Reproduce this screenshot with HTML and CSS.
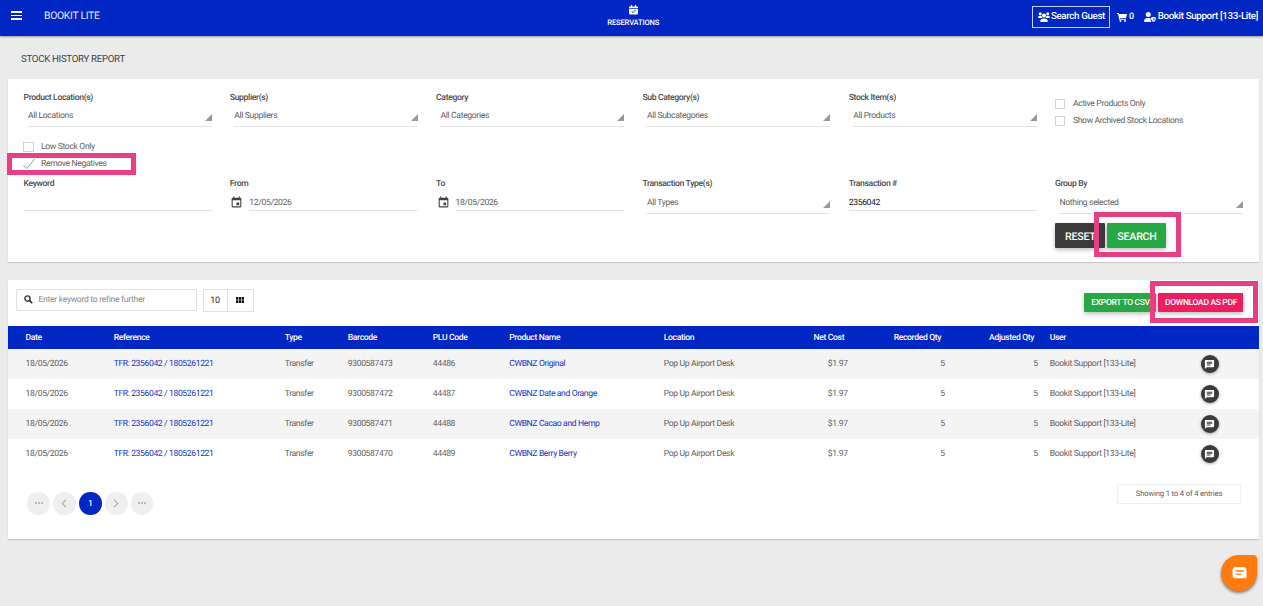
FILE: index.html
```html
<!DOCTYPE html>
<html lang="en">
<head>
<meta charset="utf-8">
<title>Stock History Report</title>
<link rel="stylesheet" href="styles.css">
</head>
<body>
<svg class="defs" width="0" height="0">
  <symbol id="calendar" viewBox="0 0 24 24"><path d="M17 12h-5v5h5v-5zM16 1v2H8V1H6v2H5c-1.100 0-2 .9-2 2v14c0 1.100.9 2 2 2h14c1.100 0 2-.9 2-2V5c0-1.100-.9-2-2-2h-1V1h-2zm3 18H5V8h14v11z"/></symbol>
  <symbol id="note" viewBox="0 0 24 24"><path d="M20 2H4c-1.100 0-2 .9-2 2v18l4-4h14c1.100 0 2-.9 2-2V4c0-1.100-.9-2-2-2zM6 6h12v2H6zm0 3h12v2H6zm8 5H6v-2h8z"/></symbol>
</svg>
<header class="topbar">
  <div class="brand">
    <span class="burger"><i></i><i></i><i></i></span>
    <span class="brand-name">BOOKIT LITE</span>
  </div>
  <div class="nav-item">
    <svg width="9" height="10" viewBox="0 0 20 22"><path fill="#fff" d="M4 0h3v3h6V0h3v3h2a2 2 0 0 1 2 2v2H0V5a2 2 0 0 1 2-2h2zM0 8.500h20V19a2 2 0 0 1-2 2H2a2 2 0 0 1-2-2z"/><path d="M6 14l3 3 5.500-6" fill="none" stroke="#0026c4" stroke-width="2"/></svg>
    <span>RESERVATIONS</span>
  </div>
  <div class="user-tools">
    <span class="guest"><svg width="12" height="10" viewBox="0 0 24 20"><g fill="#fff"><circle cx="4.500" cy="3.500" r="3"/><circle cx="19.500" cy="3.500" r="3"/><circle cx="12" cy="7" r="4"/><path d="M0 11c0-2 1.500-3.500 3.500-3.500h2c.7 0 1.300.2 1.800.5.2 1.700.8 3 1.700 4H1c-.6 0-1-.4-1-1zM24 11c0-2-1.500-3.500-3.500-3.500h-2c-.7 0-1.300.2-1.800.5-.2 1.700-.8 3-1.700 4h8c.6 0 1-.4 1-1zM4.500 19c0-3.500 2.500-6 5.500-6h4c3 0 5.500 2.500 5.500 6 0 .6-.4 1-1 1h-13c-.6 0-1-.4-1-1z"/></g></svg>Search Guest</span>
    <span class="cart"><svg width="10" height="9" viewBox="0 0 20 18"><path fill="#fff" d="M0 0h3.500l.5 2h16l-2 8H6l.3 1.500H18v2H4.500L2.200 2H0z"/><circle cx="7" cy="16" r="2" fill="#fff"/><circle cx="16" cy="16" r="2" fill="#fff"/></svg>0</span>
    <span class="account"><svg width="12" height="10" viewBox="0 0 24 20"><path fill="#fff" d="M0 18.500C0 14.500 3 12 7 12h3c1.500 0 2.500.3 3.500.9-.8 2.500-.2 5.300 1.500 7.100H1.500C.6 20 0 19.400 0 18.500z"/><circle cx="8.500" cy="5.200" r="5" fill="#fff"/><path fill="#fff" d="M19 9.500l5 2c0 4-1.500 7-5 8.500-3.500-1.500-5-4.500-5-8.500z"/><path fill="#0026c4" d="M19 12v5.500c1.500-.9 2.400-2.500 2.500-4.500z"/></svg>Bookit Support [133-Lite]</span>
  </div>
</header>

<main>
  <h1>STOCK HISTORY REPORT</h1>
  <section class="card filters">
    <div class="field"><label>Product Location(s)</label><div class="select">All Locations</div></div>
    <div class="field"><label>Supplier(s)</label><div class="select">All Suppliers</div></div>
    <div class="field"><label>Category</label><div class="select">All Categories</div></div>
    <div class="field"><label>Sub Category(s)</label><div class="select">All Subcategories</div></div>
    <div class="field"><label>Stock Item(s)</label><div class="select">All Products</div></div>
    <div class="checks side">
      <div class="check"><i class="box"></i>Active Products Only</div>
      <div class="check"><i class="box"></i>Show Archived Stock Locations</div>
    </div>
    <div class="checks below">
      <div class="check"><i class="box"></i>Low Stock Only</div>
      <div class="check"><svg class="tick" width="13" height="12" viewBox="0 0 13 12"><path d="M.3 7.500L3.800 10.500 11.500 1" fill="none" stroke="#68b9ae" stroke-width="1"/></svg>Remove Negatives</div>
    </div>
    <div class="field"><label>Keyword</label><div class="input"></div></div>
    <div class="field"><label>From</label><div class="date"><svg width="13" height="13"><use href="#calendar"/></svg><div class="input">12/05/2026</div></div></div>
    <div class="field"><label>To</label><div class="date"><svg width="13" height="13"><use href="#calendar"/></svg><div class="input">18/05/2026</div></div></div>
    <div class="field"><label>Transaction Type(s)</label><div class="select low">All Types</div></div>
    <div class="field"><label>Transaction #</label><div class="input dark">2356042</div></div>
    <div class="field"><label>Group By</label><div class="select low">Nothing selected</div></div>
    <div class="actions"><span class="btn reset">RESET</span><span class="btn search">SEARCH</span></div>
  </section>

  <section class="card results">
    <div class="toolbar">
      <div class="refine"><svg width="9" height="9" viewBox="0 0 18 18"><circle cx="7" cy="7" r="5.300" fill="none" stroke="#333" stroke-width="2.800"/><path d="M11 11l5.500 5.500" stroke="#333" stroke-width="3.400"/></svg>Enter keyword to refine further</div>
      <div class="views"><span>10</span><span><svg width="8" height="6" viewBox="0 0 8 6"><path fill="#111" d="M0 0h2.300v2.700H0zM2.850 0h2.300v2.700h-2.300zM5.700 0H8v2.700H5.700zM0 3.300h2.300V6H0zM2.850 3.300h2.300V6h-2.300zM5.700 3.300H8V6H5.700z"/></svg></span></div>
      <div class="exports"><span class="btn csv">EXPORT TO CSV</span><span class="btn pdf">DOWNLOAD AS PDF</span></div>
    </div>
    <table>
      <colgroup><col class="c1"><col class="c2"><col class="c3"><col class="c4"><col class="c5"><col class="c6"><col class="c7"><col class="c8"><col class="c9"><col class="c10"><col class="c11"><col class="c12"></colgroup>
      <thead><tr><th>Date</th><th>Reference</th><th>Type</th><th>Barcode</th><th>PLU Code</th><th>Product Name</th><th>Location</th><th class="num">Net Cost</th><th class="num">Recorded Qty</th><th class="num">Adjusted Qty</th><th>User</th><th></th></tr></thead>
      <tbody>
        <tr><td>18/05/2026</td><td class="link">TFR: 2356042 / 1805261221</td><td>Transfer</td><td>9300587473</td><td>44486</td><td class="link">CWBNZ Original</td><td>Pop Up Airport Desk</td><td class="num">$1.97</td><td class="num">5</td><td class="num">5</td><td>Bookit Support [133-Lite]</td><td><span class="note"><svg width="11" height="11"><use href="#note"/></svg></span></td></tr>
        <tr><td>18/05/2026</td><td class="link">TFR: 2356042 / 1805261221</td><td>Transfer</td><td>9300587472</td><td>44487</td><td class="link">CWBNZ Date and Orange</td><td>Pop Up Airport Desk</td><td class="num">$1.97</td><td class="num">5</td><td class="num">5</td><td>Bookit Support [133-Lite]</td><td><span class="note"><svg width="11" height="11"><use href="#note"/></svg></span></td></tr>
        <tr><td>18/05/2026</td><td class="link">TFR: 2356042 / 1805261221</td><td>Transfer</td><td>9300587471</td><td>44488</td><td class="link">CWBNZ Cacao and Hemp</td><td>Pop Up Airport Desk</td><td class="num">$1.97</td><td class="num">5</td><td class="num">5</td><td>Bookit Support [133-Lite]</td><td><span class="note"><svg width="11" height="11"><use href="#note"/></svg></span></td></tr>
        <tr><td>18/05/2026</td><td class="link">TFR: 2356042 / 1805261221</td><td>Transfer</td><td>9300587470</td><td>44489</td><td class="link">CWBNZ Berry Berry</td><td>Pop Up Airport Desk</td><td class="num">$1.97</td><td class="num">5</td><td class="num">5</td><td>Bookit Support [133-Lite]</td><td><span class="note"><svg width="11" height="11"><use href="#note"/></svg></span></td></tr>
      </tbody>
    </table>
    <div class="table-foot">
      <div class="pages">
        <span class="page"><i class="dots"></i></span>
        <span class="page"><svg width="6" height="9" viewBox="0 0 6 9"><path d="M5 .8L1.300 4.500 5 8.200"/></svg></span>
        <span class="page current">1</span>
        <span class="page"><svg width="6" height="9" viewBox="0 0 6 9"><path d="M1 .8l3.700 3.700L1 8.200"/></svg></span>
        <span class="page"><i class="dots"></i></span>
      </div>
      <div class="summary">Showing 1 to 4 of 4 entries</div>
    </div>
  </section>
</main>

<div class="mark mark-negatives"></div>
<div class="mark mark-search"></div>
<div class="mark mark-pdf"></div>
<div class="chat"><svg width="15" height="12" viewBox="0 0 15 12"><path fill="#fff" d="M3.500 0h8A3 3 0 0 1 14.500 3v7.200a1 1 0 0 1-1 1h-10A3 3 0 0 1 .5 8.200V3a3 3 0 0 1 3-3z"/><path d="M3.500 4h8.300M3.500 7.200h5.800" stroke="#ff7a0f" stroke-width="1.300"/></svg></div>
</body>
</html>
```

FILE: styles.css
```css
* { box-sizing: border-box; }
body {
  margin: 0;
  height: 606px;
  overflow: hidden;
  background: #ebebeb;
  color: #5e5e5e;
  font: 8.600px/12px Roboto, sans-serif;
  letter-spacing: -.35px;
  white-space: nowrap;
  text-rendering: geometricPrecision;
}
svg { display: block; flex: none; }
.defs { position: absolute; }

/* Top bar */
.topbar {
  display: grid;
  grid-template-columns: 1fr auto 1fr;
  height: 36px;
  padding: 0 5px 0 10.500px;
  background: #0026c4;
  color: #fff;
  box-shadow: 0 1px 2px rgba(0, 0, 0, .35);
}
.brand { display: flex; align-items: center; height: 32px; }
.burger { display: flex; flex-direction: column; gap: 2px; width: 11px; margin: -1px 22.500px 0 0; }
.burger i { height: 1.400px; background: #fff; }
.brand-name { font-size: 10.400px; color: #e6e9fa; letter-spacing: -.3px; }
.nav-item {
  display: flex;
  flex-direction: column;
  align-items: center;
  margin-left: -2px;
  padding-top: 5px;
  font-size: 7.600px;
  font-weight: 500;
  letter-spacing: -.17px;
}
.nav-item span { line-height: 10px; margin-top: 3px; }
.user-tools {
  display: flex;
  align-items: center;
  justify-content: flex-end;
  height: 33px;
  font-size: 9.800px;
  font-weight: 500;
  letter-spacing: -.37px;
}
.user-tools span { display: flex; align-items: center; }
.guest { gap: 1px; width: 78px; height: 22px; padding: 0 4px 0 5px; border: 1px solid #c8d0f4; }
.cart { gap: 2px; margin-left: 7px; padding-top: 1px; font-size: 9px; }
.account { gap: 2px; margin-left: 10px; padding-top: 1px; }

/* Cards */
main { padding: 0 4px 0 8px; }
h1 { margin: 0; padding: 14.500px 13px 0; height: 43px; font-size: 9.700px; line-height: 18px; font-weight: 400; color: #444; letter-spacing: -.31px; }
.card { background: #fff; box-shadow: 0 1px 1px rgba(0, 0, 0, .15); }

/* Filters */
.filters {
  display: grid;
  grid-template-columns: repeat(6, 188px);
  grid-template-rows: 60px 26px 45px 26px;
  column-gap: 18.300px;
  height: 183px;
  padding: 13px 15px 0 15.500px;
}
label { display: block; height: 12px; line-height: 13px; font-weight: 500; color: #4b4b4b; }
.select {
  position: relative;
  height: 23px;
  margin-left: 4px;
  padding: 6px 0 0 .5px;
  border-bottom: 1px solid #e4e4e4;
}
.select::after {
  content: "";
  position: absolute;
  right: 0;
  bottom: 5px;
  border-left: 7px solid transparent;
  border-bottom: 7px solid #999;
}
.select.low { height: 24px; padding-top: 6.500px; }
.input { flex: 1; height: 21px; padding-top: 6.500px; border-bottom: 1px solid #e4e4e4; }
.input.dark { color: #111; }
.date { display: flex; gap: 6px; }
.date svg { margin: 6px 0 0 .5px; fill: #444; }
.checks { display: flex; flex-direction: column; gap: 5px; }
.side { padding: 6px 0 0; }
.filters .below { grid-column: 1 / -1; padding-top: 1px; margin: -12px 0 0 -.5px; }
.check { display: flex; align-items: center; height: 12px; }
.box { width: 10.500px; height: 10.500px; margin-right: 7.500px; border: 1px solid #d4d4d4; }
.tick { margin-right: 5px; }
.actions { grid-column: 6; display: flex; gap: 2px; }
.btn {
  display: flex;
  align-items: center;
  justify-content: center;
  color: #fff;
  font-weight: 500;
  border-radius: 1px;
  box-shadow: 0 2px 4px rgba(0, 0, 0, .25);
}
.actions .btn { height: 25px; padding-top: 2px; font-size: 10.700px; letter-spacing: -.25px; }
.reset { width: 50.500px; background: #3b3b3b; }
.search { width: 59px; background: #28a745; }

/* Results */
.results { height: 259px; margin-top: 18px; }
.toolbar { display: flex; align-items: flex-start; height: 46px; padding: 9px 16px 0 8px; }
.refine {
  display: flex;
  align-items: center;
  gap: 5.500px;
  width: 181px;
  height: 22px;
  padding: 0 7px 1px;
  border: 1px solid #e2e2e2;
  color: #8b8b8b;
  letter-spacing: -.3px;
}
.views { display: flex; height: 23px; margin-left: 5.500px; border: 1px solid #e2e2e2; color: #222; }
.views span { display: flex; align-items: center; justify-content: center; width: 23px; font-size: 9px; letter-spacing: -.2px; }
.views span + span { border-left: 1px solid #e2e2e2; padding-bottom: 2px; width: 26px; }
.exports { display: flex; gap: 2px; margin: 4px 0 0 auto; }
.exports .btn { height: 19px; padding: 1px 0 0 1px; font-size: 8.500px; letter-spacing: -.32px; }
.csv { width: 72px; background: #28a745; }
.pdf { width: 85px; background: #e91e63; }

table { width: 1251px; table-layout: fixed; border-collapse: collapse; }
.c1 { width: 105.700px; }
.c2 { width: 171px; }
.c3 { width: 63px; }
.c4 { width: 85px; }
.c5 { width: 76.500px; }
.c6 { width: 154.500px; }
.c7 { width: 100px; }
.c8 { width: 96px; }
.c9 { width: 97px; }
.c10 { width: 93px; }
.c11 { width: 151px; }
.c12 { width: 58.300px; }
th { height: 23px; padding: 1px 0 0; background: #0026c4; color: #fff; font-weight: 500; text-align: left; }
td { height: 30px; padding: 0; }
th:first-child, td:first-child { padding-left: 17.500px; }
tbody tr:nth-child(odd) { background: #f4f4f4; }
.link { color: #1433c4; letter-spacing: -.38px; }
th.num { text-align: right; padding-right: 15.500px; }
td.num { text-align: right; padding-right: 12px; }
.note {
  display: flex;
  align-items: center;
  justify-content: center;
  width: 18px;
  height: 18px;
  border-radius: 50%;
  background: #3b3b3b;
  box-shadow: 0 1px 3px rgba(0, 0, 0, .35);
}
.note svg { fill: #fff; }

.table-foot { display: flex; justify-content: space-between; padding: 15px 18px 0 19.300px; }
.pages { display: flex; gap: 3.300px; padding-top: 8px; }
.page {
  display: flex;
  align-items: center;
  justify-content: center;
  width: 22.600px;
  height: 22.600px;
  border-radius: 50%;
  background: #efefef;
}
.page svg { fill: none; stroke: #b3b3b3; stroke-width: 1.300px; }
.dots { width: 8px; height: 2px; background: repeating-linear-gradient(90deg, #bbb 0 2px, transparent 2px 3px); }
.current { padding-top: 1px; background: #0026c4; color: #fff; font-weight: 500; }
.summary { width: 124px; height: 20px; border: 1px solid #efefef; font-size: 7.700px; line-height: 18px; letter-spacing: -.17px; text-align: center; }

/* Overlays */
.mark { position: absolute; border: 5px solid #e83e84; }
.mark-negatives { left: 7px; top: 153px; width: 129px; height: 22px; }
.mark-search { left: 1094px; top: 212px; width: 87px; height: 45px; }
.mark-pdf { left: 1150px; top: 281px; width: 108px; height: 42px; }
.chat {
  position: absolute;
  left: 1221px;
  top: 555px;
  display: flex;
  align-items: center;
  justify-content: center;
  width: 36px;
  height: 36px;
  border-radius: 18px 4px 18px 18px;
  background: #ff7a0f;
  box-shadow: 0 2px 3px rgba(0, 0, 0, .45);
}
```
